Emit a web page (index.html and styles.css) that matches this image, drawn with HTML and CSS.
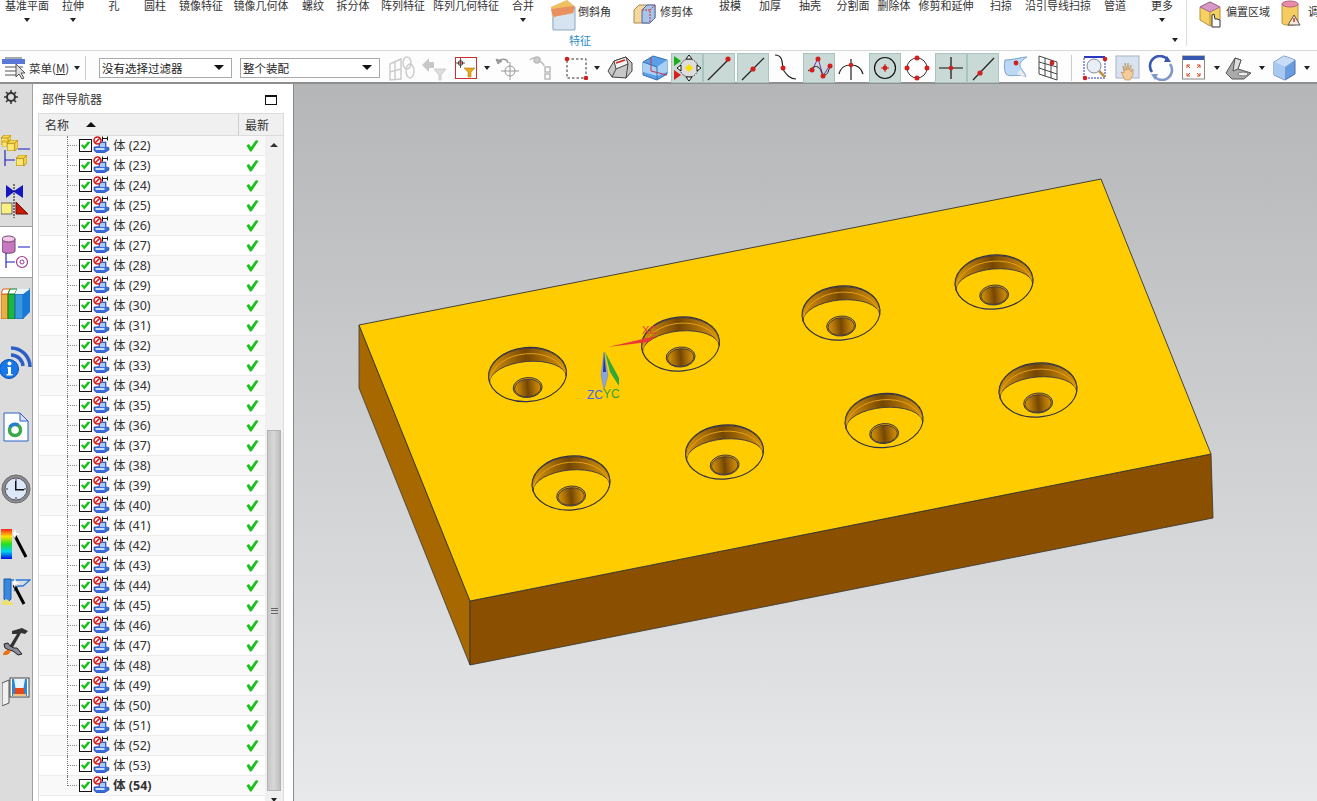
FILE: index.html
```html
<!DOCTYPE html>
<html lang="zh">
<head>
<meta charset="utf-8">
<title>部件导航器</title>
<link rel="stylesheet" href="styles.css">
</head>
<body>
<svg class="defs" aria-hidden="true">
  <symbol id="chk" viewBox="0 0 13 13"><rect x=".5" y=".5" width="12" height="12" fill="#fff" stroke="#111"/><path d="M2 6.500 5.300 10.500 11.500 3.200 8.800 2.600 5.200 7 3.800 5.200Z" fill="#14c014"/></symbol>
  <symbol id="body" viewBox="0 0 17 17"><path d="M6 6h7v5l3 .5V14l-5 3H4l-3-2.500V11l5-.5Z" fill="#3a6cd8" stroke="#1f3f9c" stroke-width=".6"/><path d="M7 7h5v4H7Z" fill="#a9c8f4"/><path d="M2.500 12h9v2h-9Z" fill="#cfe0fa"/><path d="M9.500 .5v5M9.500 2.500h5M14.500 .5v4" stroke="#111" fill="none"/><circle cx="4.500" cy="4.500" r="3.500" fill="#fff" stroke="#d81818" stroke-width="1.600"/><path d="M2 7 7 2" stroke="#d81818" stroke-width="1.600"/></symbol>
  <symbol id="tick" viewBox="0 0 13 13"><path d="M.5 6.500 3 5l2 3 5-7 2.500 1L5.500 12.500H4Z" fill="#1cc01c"/></symbol>
  <symbol id="cube" viewBox="0 0 10 10"><path d="M0 3 3 0h7v7l-3 3H0Z" fill="#f8d848" stroke="#b08820" stroke-width=".8"/><path d="M0 3h7v7M7 3l3-3" fill="none" stroke="#b08820" stroke-width=".8"/><path d="M1 4h5v5H1Z" fill="#fbe878"/></symbol>
</svg>

<header class="ribbon">
  <div class="rib-grid">
    <div class="ri">基准平面<i class="dn"></i></div>
    <div class="ri">拉伸<i class="dn"></i></div>
    <div class="ri">孔</div>
    <div class="ri">圆柱</div>
    <div class="ri">镜像特征</div>
    <div class="ri">镜像几何体</div>
    <div class="ri">螺纹</div>
    <div class="ri">拆分体</div>
    <div class="ri">阵列特征</div>
    <div class="ri">阵列几何特征</div>
    <div class="ri">合并<i class="dn"></i></div>
    <div class="rbig">
      <svg width="26" height="31" viewBox="0 0 26 31"><path d="M1 7 17 0l8 6v24H3Z" fill="#cfe0ef"/><path d="M3 15v15h22V15Z" fill="#d6e4f2"/><path d="M1 7 17 0l8 7-2 6-20 4Z" fill="#f0c060"/><path d="M1 9l22-3 2 1-2 6-20 4Z" fill="#e89060"/><path d="M3 17v13h22V7" fill="none" stroke="#8fa7bf"/></svg>
      <span>倒斜角</span>
    </div>
    <div class="rbig rbig2">
      <svg width="24" height="20" viewBox="0 0 24 20"><path d="M1 6 6 1h16v13l-5 5H1Z" fill="#f4d8a0" stroke="#a88a50"/><path d="M9 6l5-5h8v13l-5 5H9Z" fill="#a8c4ea" stroke="#4a6aa8"/><path d="M9 6h8v13M17 6l5-5" fill="none" stroke="#d03030" stroke-dasharray="2 1"/></svg>
      <span>修剪体</span>
    </div>
    <div class="ri">拔模</div>
    <div class="ri">加厚</div>
    <div class="ri">抽壳</div>
    <div class="ri">分割面</div>
    <div class="ri">删除体</div>
    <div class="ri">修剪和延伸</div>
    <div class="ri">扫掠</div>
    <div class="ri">沿引导线扫掠</div>
    <div class="ri">管道</div>
    <div class="ri ri-more">更多<i class="dn"></i><i class="dn dn-corner"></i></div>
    <div class="rbig rbig3">
      <svg width="24" height="28" viewBox="0 0 24 28"><path d="M1 6 11 1l10 5v13l-10 6-10-6Z" fill="#f6d060" stroke="#b89040"/><path d="M1 6l10 5 10-5-10-5Z" fill="#d898c8" stroke="#a06898"/><path d="M11 11v14" stroke="#b89040"/><path d="M13 26V14l2-1 1 5 2 0 3 1v7Z" fill="#fff" stroke="#333"/></svg>
      <span>偏置区域</span>
    </div>
    <div class="rbig rbig4">
      <svg width="20" height="26" viewBox="0 0 20 26"><path d="M1 4v19c0 3 16 3 16 0V4Z" fill="#f4cc60" stroke="#b8944a"/><ellipse cx="9" cy="4" rx="8" ry="3" fill="#e88ca8" stroke="#b86080"/><path d="M13 15l6 10H7Z" fill="#f8e8d8" stroke="#555"/><path d="M13 18v4" stroke="#d03030" stroke-width="1.500"/></svg>
      <span>调</span>
    </div>
  </div>
  <div class="rib-group">特征</div>
</header>

<nav class="toolbar">
  <div class="menu">
    <svg width="24" height="24" viewBox="0 0 24 24"><path d="M0 3h23v5H0Z" fill="#5a78d8"/><path d="M3 2h17M3 11h18M3 15h14M3 19h12" stroke="#555" fill="none"/><path d="M14 8v13l3-3 3 5 2-1-3-5h4Z" fill="#ddd" stroke="#555"/></svg>
    <span class="menu-t">菜单(<u>M</u>)</span><i class="dn"></i>
  </div>
  <div class="vsep"></div>
  <div class="sel sel1">没有选择过滤器<i class="dn dn-b"></i></div>
  <div class="sel sel2">整个装配<i class="dn dn-b"></i></div>
  <div class="tools">
    <div class="t"><svg width="30" height="28" viewBox="0 0 30 28" fill="none" stroke="#ccc" stroke-width="1.500"><path d="M3 10 14 5v20L3 26ZM3 18l11-3M8 8v18"/><ellipse cx="20" cy="9" rx="4" ry="6"/><ellipse cx="23" cy="17" rx="4" ry="7"/></svg></div>
    <div class="t"><svg width="28" height="26" viewBox="0 0 28 26"><path d="M2 10 9 3v4h5v6H9v4Z" fill="#c8c8c8"/><path d="M14 14h12l-5 6v5h-2v-5Z" fill="#ddd" stroke="#ccc"/></svg></div>
    <div class="t"><span class="t-red"><svg width="20" height="20" viewBox="0 0 20 20"><circle cx="4.500" cy="5" r="2.300" fill="none" stroke="#333"/><path d="M4.500 0v10M0 5h9" stroke="#333" stroke-width=".8"/><circle cx="4.500" cy="5" r="1" fill="#d02020"/><path d="M8 10h11l-4 4v5h-3v-5Z" fill="#e8a818" stroke="#a87810" stroke-width=".6"/></svg></span></div>
    <div class="t"><i class="dn"></i></div>
    <div class="t"><svg width="28" height="28" viewBox="0 0 28 28" fill="none" stroke="#999"><circle cx="16" cy="17" r="5"/><path d="M16 8v18M7 17h18"/><path d="M4 9c2-5 9-5 10 0" stroke-width="1.500"/><path d="M2 5l2 5 4-3Z" fill="#999"/></svg></div>
    <div class="t"><svg width="28" height="28" viewBox="0 0 28 28" fill="none" stroke="#bbb" stroke-width="1.500"><path d="M2 6c3-4 8-2 9 0s5 3 5 6"/><circle cx="9" cy="6" r="3" fill="#ccc"/><rect x="17" y="13" width="5" height="5"/><rect x="17" y="20" width="5" height="5"/></svg></div>
    <div class="t"><svg width="24" height="24" viewBox="0 0 24 24"><rect x="3" y="3" width="19" height="19" fill="none" stroke="#333" stroke-dasharray="2.500 2"/><circle cx="3" cy="3" r="2.300" fill="#d02020"/><circle cx="22" cy="22" r="2.300" fill="#d02020"/></svg></div>
    <div class="t"><i class="dn"></i></div>
    <div class="t"><svg width="26" height="24" viewBox="0 0 26 24"><path d="M1 15 7 5l12-4 6 6v8l-6 7-14-1Z" fill="#c8c8c8" stroke="#444"/><path d="M7 5 19 1l2 7-12 5Z" fill="#f2f2f2" stroke="#444"/><path d="M9 7l9-3" stroke="#d02020" stroke-width="1.500"/><path d="M21 8l-2 14M9 13l-4 8" stroke="#444" fill="none"/></svg></div>
    <div class="t"><svg width="26" height="26" viewBox="0 0 26 26"><path d="M1 7 11 1l14 4v14l-10 6-14-5Z" fill="#5aa0e8" stroke="#3870b0"/><path d="M1 7l14 5 10-7v12l-10 4-14-4Z" fill="#a8d0f4"/><path d="M9 3v13l16 4" fill="none" stroke="#d03050"/><path d="M1 7l14 5v13" fill="none" stroke="#3870b0"/></svg></div>
    <div class="t on"><svg width="28" height="28" viewBox="0 0 28 28"><path d="M1 2l7 5-7 5Z" fill="#18b018"/><path d="M1 16l7 5-7 5Z" fill="#d82020"/><circle cx="16" cy="14" r="9" fill="#ddd" stroke="#333" stroke-dasharray="1.500 1"/><path d="M16 1l3 4h-6ZM16 27l3-4h-6ZM4 14l4-3v6ZM28 14l-4-3v6Z" fill="#fff" stroke="#111"/><path d="M16 10l4 4-4 4-4-4Z" fill="#f8e000"/></svg></div>
    <div class="t on"><svg width="26" height="26" viewBox="0 0 26 26"><path d="M2 25 23 4" stroke="#222" stroke-width="1.200"/><circle cx="22" cy="4" r="2.600" fill="#d02020"/></svg></div>
    <div class="t t-gap on"><svg width="26" height="26" viewBox="0 0 26 26"><path d="M2 25 24 3" stroke="#222" stroke-width="1.200"/><circle cx="13" cy="14" r="2.600" fill="#d02020"/></svg></div>
    <div class="t"><svg width="24" height="28" viewBox="0 0 24 28" fill="none"><path d="M2 1c10 0 6 12 9 16s6 8 12 8" stroke="#222" stroke-width="1.200"/><circle cx="10" cy="14" r="2.500" fill="#d02020"/></svg></div>
    <div class="t t-gap on"><svg width="28" height="26" viewBox="0 0 28 26" fill="none"><path d="M7 16 13 3l5 18 7-11" stroke="#8a28b0"/><path d="M3 16c4-2 6-6 10-4s3 9 7 8 3-7 6-8" stroke="#222"/><circle cx="7" cy="15" r="2.500" fill="#d02020"/><circle cx="13" cy="4" r="2.500" fill="#d02020"/><circle cx="18" cy="21" r="2.500" fill="#d02020"/><circle cx="25" cy="11" r="2.500" fill="#d02020"/></svg></div>
    <div class="t"><svg width="26" height="26" viewBox="0 0 26 26" fill="none"><path d="M1 19c2-8 7-9 12-9s10 2 12 9M13 4v21" stroke="#222" stroke-width="1.200"/><circle cx="13" cy="10" r="2.300" fill="#d02020"/></svg></div>
    <div class="t t-gap on"><svg width="26" height="26" viewBox="0 0 26 26" fill="none"><circle cx="13" cy="13" r="10.500" stroke="#111" stroke-width="1.200"/><circle cx="13" cy="13" r="2.400" fill="#d02020"/><path d="M13 9v8M9 13h8" stroke="#d02020"/></svg></div>
    <div class="t"><svg width="26" height="26" viewBox="0 0 26 26" fill="none"><circle cx="13" cy="13" r="10" stroke="#333"/><circle cx="13" cy="3" r="2.500" fill="#d02020"/><circle cx="13" cy="23" r="2.500" fill="#d02020"/><circle cx="3" cy="13" r="2.500" fill="#d02020"/><circle cx="23" cy="13" r="2.500" fill="#d02020"/></svg></div>
    <div class="t t-gap on"><svg width="26" height="26" viewBox="0 0 26 26"><path d="M13 2v22M1 13h24" stroke="#111" stroke-width="1.200"/><circle cx="13" cy="13" r="2.300" fill="#d02020"/></svg></div>
    <div class="t on"><svg width="26" height="26" viewBox="0 0 26 26"><path d="M3 25 24 3" stroke="#222" stroke-width="1.200"/><circle cx="10" cy="18" r="2.600" fill="#d02020"/></svg></div>
    <div class="t"><svg width="26" height="28" viewBox="0 0 26 28"><path d="M2 6c8 0 17-3 22-3-3 2-8 5-7 9s5 6 6 11c-6-4-17 1-20-3C1 16 1 10 2 6Z" fill="#bcd8f2" stroke="#7aa4d0"/><path d="M17 12c-1 3 3 6 6 11-4-1-7-2-9-3 3-2 4-5 3-8Z" fill="#eaeaea"/><circle cx="13" cy="9" r="2.400" fill="#d02020"/></svg></div>
    <div class="t"><svg width="24" height="28" viewBox="0 0 24 28" fill="none" stroke="#333" stroke-width=".9"><path d="M3 2 21 8v18L3 20ZM9 4v18M15 6v18M3 8l18 5M3 14l18 6"/><circle cx="16" cy="9" r="2.400" fill="#d02020" stroke="none"/></svg></div>
    <div class="t t-sep"></div>
    <div class="t"><svg width="26" height="26" viewBox="0 0 26 26" fill="none"><rect x="1" y="2" width="21" height="21" fill="#fff" stroke="#2838c0" stroke-dasharray="2 1"/><path d="M1 2h21" stroke="#2838c0" stroke-width="2"/><circle cx="11" cy="11" r="7" fill="#e8eef6" stroke="#889"/><path d="M16 16l6 6" stroke="#c09040" stroke-width="2.500"/><circle cx="22" cy="4" r="2.300" fill="#d02020"/><circle cx="2" cy="23" r="2.300" fill="#d02020"/></svg></div>
    <div class="t"><svg width="26" height="26" viewBox="0 0 26 26"><rect x="1" y="1" width="23" height="22" fill="#d8e2f0" stroke="#aab4c4"/><path d="M10 25l-4-8 3 1-1-7 2 5V8l2 7 1-7 1 7 2-5v7l2-3v6l-3 5Z" fill="#f4cc98" stroke="#b08850" stroke-width=".6"/></svg></div>
    <div class="t"><svg width="26" height="26" viewBox="0 0 26 26" fill="none" stroke-width="2.600"><path d="M4 17A10 10 0 0 1 20 5" stroke="#3858b0"/><path d="M22 9a10 10 0 0 1-16 12" stroke="#8098c8"/><path d="M19 1l4 6-7 0Z" fill="#3858b0" stroke="none"/><path d="M7 25l-4-6 7 0Z" fill="#8098c8" stroke="none"/></svg></div>
    <div class="t"><svg width="24" height="26" viewBox="0 0 24 26"><rect x=".5" y="1" width="22" height="23" fill="#fff" stroke="#888"/><path d="M1 1h21v4H1Z" fill="#3858b0"/><path d="M5 10l3 3M5 10v3M5 10h3M18 10l-3 3M18 10v3M18 10h-3M5 21l3-3M5 21v-3M5 21h3M18 21l-3-3M18 21v-3M18 21h-3" stroke="#d84820" fill="none"/></svg></div>
    <div class="t"><i class="dn"></i></div>
    <div class="t"><svg width="28" height="24" viewBox="0 0 28 24"><path d="M1 17 10 2l6 2-3 9 13 4-7 6H7Z" fill="#aaa" stroke="#555"/><path d="M10 2l6 2-3 9-5 2Z" fill="#ddd" stroke="#555"/><ellipse cx="18" cy="18" rx="5" ry="2" fill="#eee" stroke="#777"/></svg></div>
    <div class="t"><i class="dn"></i></div>
    <div class="t"><svg width="24" height="26" viewBox="0 0 24 26"><path d="M1 7 11 1l11 4v14l-10 6-11-5Z" fill="#6a9ce0" stroke="#4a70b0"/><path d="M1 7l11 5v13l-11-5Z" fill="#a8c8f0"/><path d="M1 7 11 1l11 4-10 7Z" fill="#c8dcf6"/></svg></div>
    <div class="t"><i class="dn"></i></div>
  </div>
</nav>

<main class="main">
  <aside class="tabs">
    <div class="tab tab-gear"><svg width="16" height="16" viewBox="0 0 16 16" fill="none" stroke="#333"><circle cx="8" cy="8" r="4" stroke-width="2"/><path d="M8 1v3M8 12v3M1 8h3M12 8h3M3 3l2 2M11 11l2 2M13 3l-2 2M3 13l2-2" stroke-width="1.500"/></svg></div>
    <div class="tab"><svg width="30" height="34" viewBox="0 0 30 34"><use href="#cube" x="0" y="1" width="10" height="10"/><use href="#cube" x="1" y="6" width="7" height="7"/><use href="#cube" x="6" y="6" width="11" height="11"/><path d="M17 15h12M4 16v16M4 26h10" stroke="#1818c0" fill="none" stroke-width="1.100"/><use href="#cube" x="15" y="21" width="11" height="11"/></svg></div>
    <div class="tab"><svg width="30" height="34" viewBox="0 0 30 34"><path d="M5 1l8 6 9-6v13l-9-6-8 6Z" fill="#1818c0"/><path d="M13 0v34" stroke="#111" stroke-dasharray="2 1"/><rect x="0" y="19" width="11" height="11" fill="#f8f080" stroke="#666"/><path d="M15 18v12h12Z" fill="#c81808" stroke="#701008"/></svg></div>
    <div class="tab tab-on"><svg width="30" height="34" viewBox="0 0 30 34"><path d="M0 4v12c0 3 13 3 13 0V4Z" fill="#c878c0" stroke="#704870"/><ellipse cx="6.500" cy="4" rx="6.500" ry="3" fill="#f4c8e8" stroke="#704870"/><path d="M16 12h12M4 18v15M4 27h9" stroke="#1818c0" fill="none" stroke-width="1.100"/><circle cx="20" cy="27" r="5.500" fill="#fff" stroke="#a03898" stroke-width="1.200"/><circle cx="20" cy="27" r="2" fill="none" stroke="#a03898"/></svg></div>
    <div class="tab"><svg width="31" height="32" viewBox="0 0 31 32"><path d="M0 7h7v25H0Z" fill="#e8b040" stroke="#e06010"/><path d="M2 2h7l-2 5H0Z" fill="#fff" stroke="#e06010"/><path d="M7 7h7v25H7Z" fill="#1cb83c" stroke="#108020"/><path d="M9 2h7l-2 5H7Z" fill="#fff" stroke="#108020"/><path d="M14 7h8v25h-8Z" fill="#3898e0" stroke="#1868b0"/><path d="M22 7l7-6v24l-7 7Z" fill="#1878d8"/><path d="M16 2h13l-7 5h-8Z" fill="#e8f4ff"/></svg></div>
    <div class="tab tab-lg"><svg width="32" height="34" viewBox="0 0 32 34" fill="none"><path d="M11 3a19 19 0 0 1 19 19" stroke="#2c5ec8" stroke-width="3.500"/><path d="M11 10a12 12 0 0 1 12 11" stroke="#2c5ec8" stroke-width="3.500"/><circle cx="9" cy="24" r="9.500" fill="#1878e8" stroke="#0a4ab0"/><circle cx="9.500" cy="18.500" r="2" fill="#fff"/><path d="M7.500 22h3.500v7h1.500v1.500h-6V29H8v-5.500H7.500Z" fill="#fff"/></svg></div>
    <div class="tab tab-lg"><svg width="26" height="30" viewBox="0 0 26 30"><path d="M1 1h16l8 8v20H1Z" fill="#fff" stroke="#2a62c8"/><path d="M17 1v8h8Z" fill="#dde" stroke="#2a62c8"/><circle cx="12" cy="18" r="5.500" fill="none" stroke="#38a848" stroke-width="3.500"/><path d="M7 15a6 6 0 0 1 8-2" stroke="#2a7ad8" stroke-width="3.500" fill="none"/></svg></div>
    <div class="tab tab-lg"><svg width="30" height="30" viewBox="0 0 30 30"><circle cx="15" cy="15" r="14" fill="#8c8c8c" stroke="#6c6c6c"/><circle cx="15" cy="15" r="11" fill="#dce8f8" stroke="#556"/><path d="M15 5v2M15 23v2M5 15h2M23 15h2" stroke="#333"/><path d="M14 7h1.500v8H23v1.500H14Z" fill="#111"/></svg></div>
    <div class="tab tab-sm"><svg width="30" height="32" viewBox="0 0 30 32"><defs><linearGradient id="rb" x1="0" y1="0" x2="0" y2="1"><stop offset="0" stop-color="#ff2020"/><stop offset=".25" stop-color="#ffe000"/><stop offset=".5" stop-color="#20e020"/><stop offset=".75" stop-color="#00d0f0"/><stop offset="1" stop-color="#0010e0"/></linearGradient></defs><rect x="0" y="1" width="11" height="30" fill="url(#rb)"/><path d="M14 8l11 21" stroke="#000" stroke-width="3"/><path d="M12 6l2-5 1 4 5 1-5 1-1 4Z" fill="#fff"/></svg></div>
    <div class="tab"><svg width="30" height="30" viewBox="0 0 30 30"><path d="M3 2h7v20l-4 4-3-4Z" fill="#3888e0" stroke="#1858a8"/><path d="M0 26l5-4 5 3 3 3H2Z" fill="#f0e070"/><path d="M10 3h19l-7 6h-5l-4 5" fill="none" stroke="#2a7ad8" stroke-width="1.300"/><path d="M13 8l10 19" stroke="#000" stroke-width="3"/><path d="M12 6l2-5 1 4 4 1-4 1-1 4Z" fill="#fff"/></svg></div>
    <div class="tab"><svg width="28" height="30" viewBox="0 0 28 30"><path d="M10 4l10-3 6 3-3 3-4-1-9 16-3-2 8-13-5 0Z" fill="#333"/><path d="M2 17l4-1 2 3 4 2 3 0 5 6-4 1-5-4-4-1-4-2Z" fill="#8a8a98" stroke="#222"/><path d="M1 28c0-3 3-5 6-5s1 6-6 5Z" fill="#f07010"/></svg></div>
    <div class="tab tab-sm"><svg width="28" height="30" viewBox="0 0 28 30"><path d="M0 7l7-3v23L0 30Z" fill="#f0f0f0" stroke="#555"/><rect x="8" y="2" width="19" height="19" fill="#fff" stroke="#444"/><path d="M10 3h15v17H10Z" fill="#2888d8"/><path d="M12 3h11l-2 12h-7Z" fill="#e8f4ff"/><path d="M13 12h9v6H13Z" fill="#e84818"/><path d="M11 18h13v2H11Z" fill="#f8c080"/></svg></div>
  </aside>

  <section class="panel">
    <div class="panel-head"><span>部件导航器</span><i class="maxbox"></i></div>
    <div class="frame">
      <div class="thead"><div class="th-name">名称<i class="up"></i></div><div class="th-new">最新</div></div>
      <div class="tbody">
        <div class="list">
          <div class="row"><span class="tree"></span><svg class="chk"><use href="#chk"/></svg><svg class="bd"><use href="#body"/></svg><span class="lb">体 (22)</span><svg class="tk"><use href="#tick"/></svg></div>
          <div class="row"><span class="tree"></span><svg class="chk"><use href="#chk"/></svg><svg class="bd"><use href="#body"/></svg><span class="lb">体 (23)</span><svg class="tk"><use href="#tick"/></svg></div>
          <div class="row"><span class="tree"></span><svg class="chk"><use href="#chk"/></svg><svg class="bd"><use href="#body"/></svg><span class="lb">体 (24)</span><svg class="tk"><use href="#tick"/></svg></div>
          <div class="row"><span class="tree"></span><svg class="chk"><use href="#chk"/></svg><svg class="bd"><use href="#body"/></svg><span class="lb">体 (25)</span><svg class="tk"><use href="#tick"/></svg></div>
          <div class="row"><span class="tree"></span><svg class="chk"><use href="#chk"/></svg><svg class="bd"><use href="#body"/></svg><span class="lb">体 (26)</span><svg class="tk"><use href="#tick"/></svg></div>
          <div class="row"><span class="tree"></span><svg class="chk"><use href="#chk"/></svg><svg class="bd"><use href="#body"/></svg><span class="lb">体 (27)</span><svg class="tk"><use href="#tick"/></svg></div>
          <div class="row"><span class="tree"></span><svg class="chk"><use href="#chk"/></svg><svg class="bd"><use href="#body"/></svg><span class="lb">体 (28)</span><svg class="tk"><use href="#tick"/></svg></div>
          <div class="row"><span class="tree"></span><svg class="chk"><use href="#chk"/></svg><svg class="bd"><use href="#body"/></svg><span class="lb">体 (29)</span><svg class="tk"><use href="#tick"/></svg></div>
          <div class="row"><span class="tree"></span><svg class="chk"><use href="#chk"/></svg><svg class="bd"><use href="#body"/></svg><span class="lb">体 (30)</span><svg class="tk"><use href="#tick"/></svg></div>
          <div class="row"><span class="tree"></span><svg class="chk"><use href="#chk"/></svg><svg class="bd"><use href="#body"/></svg><span class="lb">体 (31)</span><svg class="tk"><use href="#tick"/></svg></div>
          <div class="row"><span class="tree"></span><svg class="chk"><use href="#chk"/></svg><svg class="bd"><use href="#body"/></svg><span class="lb">体 (32)</span><svg class="tk"><use href="#tick"/></svg></div>
          <div class="row"><span class="tree"></span><svg class="chk"><use href="#chk"/></svg><svg class="bd"><use href="#body"/></svg><span class="lb">体 (33)</span><svg class="tk"><use href="#tick"/></svg></div>
          <div class="row"><span class="tree"></span><svg class="chk"><use href="#chk"/></svg><svg class="bd"><use href="#body"/></svg><span class="lb">体 (34)</span><svg class="tk"><use href="#tick"/></svg></div>
          <div class="row"><span class="tree"></span><svg class="chk"><use href="#chk"/></svg><svg class="bd"><use href="#body"/></svg><span class="lb">体 (35)</span><svg class="tk"><use href="#tick"/></svg></div>
          <div class="row"><span class="tree"></span><svg class="chk"><use href="#chk"/></svg><svg class="bd"><use href="#body"/></svg><span class="lb">体 (36)</span><svg class="tk"><use href="#tick"/></svg></div>
          <div class="row"><span class="tree"></span><svg class="chk"><use href="#chk"/></svg><svg class="bd"><use href="#body"/></svg><span class="lb">体 (37)</span><svg class="tk"><use href="#tick"/></svg></div>
          <div class="row"><span class="tree"></span><svg class="chk"><use href="#chk"/></svg><svg class="bd"><use href="#body"/></svg><span class="lb">体 (38)</span><svg class="tk"><use href="#tick"/></svg></div>
          <div class="row"><span class="tree"></span><svg class="chk"><use href="#chk"/></svg><svg class="bd"><use href="#body"/></svg><span class="lb">体 (39)</span><svg class="tk"><use href="#tick"/></svg></div>
          <div class="row"><span class="tree"></span><svg class="chk"><use href="#chk"/></svg><svg class="bd"><use href="#body"/></svg><span class="lb">体 (40)</span><svg class="tk"><use href="#tick"/></svg></div>
          <div class="row"><span class="tree"></span><svg class="chk"><use href="#chk"/></svg><svg class="bd"><use href="#body"/></svg><span class="lb">体 (41)</span><svg class="tk"><use href="#tick"/></svg></div>
          <div class="row"><span class="tree"></span><svg class="chk"><use href="#chk"/></svg><svg class="bd"><use href="#body"/></svg><span class="lb">体 (42)</span><svg class="tk"><use href="#tick"/></svg></div>
          <div class="row"><span class="tree"></span><svg class="chk"><use href="#chk"/></svg><svg class="bd"><use href="#body"/></svg><span class="lb">体 (43)</span><svg class="tk"><use href="#tick"/></svg></div>
          <div class="row"><span class="tree"></span><svg class="chk"><use href="#chk"/></svg><svg class="bd"><use href="#body"/></svg><span class="lb">体 (44)</span><svg class="tk"><use href="#tick"/></svg></div>
          <div class="row"><span class="tree"></span><svg class="chk"><use href="#chk"/></svg><svg class="bd"><use href="#body"/></svg><span class="lb">体 (45)</span><svg class="tk"><use href="#tick"/></svg></div>
          <div class="row"><span class="tree"></span><svg class="chk"><use href="#chk"/></svg><svg class="bd"><use href="#body"/></svg><span class="lb">体 (46)</span><svg class="tk"><use href="#tick"/></svg></div>
          <div class="row"><span class="tree"></span><svg class="chk"><use href="#chk"/></svg><svg class="bd"><use href="#body"/></svg><span class="lb">体 (47)</span><svg class="tk"><use href="#tick"/></svg></div>
          <div class="row"><span class="tree"></span><svg class="chk"><use href="#chk"/></svg><svg class="bd"><use href="#body"/></svg><span class="lb">体 (48)</span><svg class="tk"><use href="#tick"/></svg></div>
          <div class="row"><span class="tree"></span><svg class="chk"><use href="#chk"/></svg><svg class="bd"><use href="#body"/></svg><span class="lb">体 (49)</span><svg class="tk"><use href="#tick"/></svg></div>
          <div class="row"><span class="tree"></span><svg class="chk"><use href="#chk"/></svg><svg class="bd"><use href="#body"/></svg><span class="lb">体 (50)</span><svg class="tk"><use href="#tick"/></svg></div>
          <div class="row"><span class="tree"></span><svg class="chk"><use href="#chk"/></svg><svg class="bd"><use href="#body"/></svg><span class="lb">体 (51)</span><svg class="tk"><use href="#tick"/></svg></div>
          <div class="row"><span class="tree"></span><svg class="chk"><use href="#chk"/></svg><svg class="bd"><use href="#body"/></svg><span class="lb">体 (52)</span><svg class="tk"><use href="#tick"/></svg></div>
          <div class="row"><span class="tree"></span><svg class="chk"><use href="#chk"/></svg><svg class="bd"><use href="#body"/></svg><span class="lb">体 (53)</span><svg class="tk"><use href="#tick"/></svg></div>
          <div class="row row-last"><span class="tree"></span><svg class="chk"><use href="#chk"/></svg><svg class="bd"><use href="#body"/></svg><span class="lb">体 (54)</span><svg class="tk"><use href="#tick"/></svg></div>
        </div>
        <div class="sbar">
          <div class="sb-up"><i class="up up-sm"></i></div>
          <div class="sb-track"></div>
          <div class="sb-thumb"><i class="grip"></i></div>
          <div class="sb-dn"><i class="dn"></i></div>
        </div>
      </div>
    </div>
  </section>

  <section class="canvas">
    <svg class="scene" viewBox="294 84 1023 717">
      <defs>
        <linearGradient id="wall" x1="0" y1="0" x2="1" y2="0"><stop offset="0" stop-color="#d89400"/><stop offset=".22" stop-color="#b07408"/><stop offset=".5" stop-color="#744600"/><stop offset=".78" stop-color="#b07408"/><stop offset="1" stop-color="#d89400"/></linearGradient>
        <g id="hole" transform="rotate(-5)">
          <ellipse rx="39" ry="27" fill="#ffcc00" stroke="#30304a" stroke-width="1.100"/>
          <path d="M-38.500 5A39 27 0 1 1 38.500 5 38.500 18 0 0 0-38.500 5Z" fill="url(#wall)" stroke="#30304a" stroke-width=".8"/>
          <path d="M-37.500 1A38 26 0 0 1 37.500 1" fill="none" stroke="#e8a418" stroke-width=".9"/>
          <ellipse cx="-1" cy="13" rx="14.500" ry="10" fill="#e0a000" stroke="#30304a" stroke-width=".9"/>
          <ellipse cx="-1" cy="13.500" rx="13.200" ry="8.800" fill="url(#wall)" stroke="#30304a" stroke-width=".8"/>
        </g>
      </defs>
      <path d="M359 325 470 601V665L359 388Z" fill="#a86800" stroke="#3c3c3c" stroke-width=".8"/>
      <path d="M470 601 1211 454 1213 518 470 665Z" fill="#8a5000" stroke="#333" stroke-width=".8"/>
      <path d="M359 325 1101 179 1211 454 470 601Z" fill="#ffcc00" stroke="#333" stroke-width=".9"/>
      <use href="#hole" x="527.500" y="374.500"/>
      <use href="#hole" x="680.500" y="344"/>
      <use href="#hole" x="841" y="313"/>
      <use href="#hole" x="994" y="282"/>
      <use href="#hole" x="571" y="483"/>
      <use href="#hole" x="724.500" y="452"/>
      <use href="#hole" x="884" y="420.500"/>
      <use href="#hole" x="1038" y="390"/>
      <path d="M608 347 656 336 648 342Z" fill="#e83838"/>
      <path d="M604 352 608 375 604 390 601 375Z" fill="#8ca4d8" stroke="#6c84c0" stroke-width=".5"/>
      <path d="M604 352 606 372H603Z" fill="#1838a8"/>
      <path d="M605 352 619 378 619 386 610 372Z" fill="#30a838"/>
      <text class="ax ax-x" x="642" y="334">XC</text>
      <text class="ax ax-z" x="587" y="399">ZC</text>
      <text class="ax ax-y" x="603" y="398">YC</text>
    </svg>
  </section>
</main>
</body>
</html>
```
FILE: styles.css
```css
* { box-sizing: border-box; }
html, body { margin: 0; height: 801px; overflow: hidden; background: #fff; }
body {
  width: 1317px;
  display: flex;
  flex-direction: column;
  font-family: "Noto Sans CJK SC", "Liberation Sans", sans-serif;
  font-size: 11px;
  color: #333;
}
i { font-style: normal; display: block; }
.defs { position: absolute; width: 0; height: 0; }

.dn { width: 0; height: 0; border: 3.5px solid transparent; border-top: 4px solid #222; border-bottom: 0; }
.dn-b { border-width: 5px 5px 0; border-top-color: #111; margin-left: auto; }

/* ribbon */
.ribbon { height: 51px; flex: none; border-bottom: 1px solid #d9d9d9; background: #fff; position: relative; overflow: hidden; }
.rib-grid {
  display: grid;
  height: 34px;
  margin-left: -1px;
  grid-template-columns: 56px 36px 46px 36px 56px 64px 40px 40px 60px 66px 48px 79px 84px 40px 40px 40px 46px 36px 68px 42px 72px 42px 52px 94px 37px;
}
.ri { display: flex; flex-direction: column; align-items: center; line-height: 13px; white-space: nowrap; font-family: "Liberation Sans", "Noto Sans CJK SC", sans-serif; }
.ri .dn { margin-top: 5px; }
.ri-more { position: relative; }
.ri .dn-corner { position: absolute; top: 38px; left: 36px; margin: 0; }
.rbig { display: flex; align-items: flex-start; gap: 2px; padding-left: 3px; white-space: nowrap; }
.rbig span { margin-top: 4px; line-height: 15px; }
.rbig2 { padding-left: 7px; gap: 3px; }
.rbig2 svg { margin-top: 4px; }
.rbig3 { padding-left: 12px; gap: 3px; border-left: 1px solid #ddd; height: 46px; margin-left: -2px; }
.rbig3 svg { margin-top: 1px; }
.rbig4 { padding-left: 0; margin-left: -1px; gap: 7px; }
.rib-group { position: absolute; top: 33px; left: 569px; color: #2b8cc4; font-size: 11px; line-height: 15px; }

/* toolbar */
.toolbar { height: 33px; flex: none; display: flex; align-items: center; padding-top: 2px; border-bottom: 2px solid #8f8f8f; background: #fdfdfd; }
.menu { width: 85px; display: flex; align-items: center; padding-left: 2px; gap: 3px; }
.menu-t { white-space: nowrap; margin-right: 2px; font-size: 11.5px; }
.vsep { width: 1px; height: 24px; background: #ccc; margin-right: 13px; }
.sel { height: 20px; border: 1px solid #aaa; background: #fff; display: flex; align-items: center; padding: 0 7px 0 2px; color: #222; font-size: 11.5px; }
.sel1 { width: 133px; margin-right: 8px; }
.sel2 { width: 140px; margin-right: 6px; }
.tools {
  display: grid;
  height: 30px;
  grid-template-columns: 32px 32px 32px 10px 32px 36px 32px 10px 36px 33px 32px 32px 34px 32px 34px 32px 34px 32px 34px 32px 33px 31px 17px 32px 32px 33px 34px 12px 32px 14px 32px 12px;
  align-items: center;
  justify-items: center;
}
.t { width: 100%; height: 30px; display: flex; align-items: center; justify-content: center; }
.t.on { background: #c8d9d6; border: 1px solid #a9c4bf; }
.t-gap.on { margin-left: 2px; width: calc(100% - 2px); }
.t-sep::after { content: ""; width: 1px; height: 26px; background: #ccc; }
.t-red { width: 22px; height: 22px; border: 1px solid #c83030; display: flex; align-items: center; justify-content: center; background: #fff; }

/* main */
.main { flex: 1; display: flex; min-height: 0; }
.tabs { width: 33px; flex: none; background: #dcdcdc; border-right: 1px solid #a0a0a0; display: flex; flex-direction: column; overflow: hidden; }
.tab { height: 50px; flex: none; display: flex; align-items: center; justify-content: center; }
.tab-gear { height: 42px; align-items: flex-start; padding-top: 5px; padding-right: 11px; padding-left: 0; }
.tab-on { height: 52px; background: #fff; margin-right: -1px; border-top: 1px solid #a0a0a0; border-bottom: 1px solid #a0a0a0; }
.tab-lg { height: 62px; }
.tab-lg:nth-child(6) { height: 68px; }
.tab-sm { height: 47px; }

.panel { width: 261px; flex: none; border-right: 1px solid #8a8a8a; background: #fff; display: flex; flex-direction: column; padding: 0 9px 0 5px; }
.panel-head { height: 29px; flex: none; display: flex; align-items: center; padding: 0 7px 0 4px; justify-content: space-between; color: #333; font-size: 12px; }
.maxbox { width: 12px; height: 10px; border: 1px solid #111; border-top-width: 2px; margin-top: 2px; }
.frame { flex: 1; min-height: 0; border: 1px solid #dcdcdc; border-bottom: 0; display: flex; flex-direction: column; }
.thead { height: 22px; flex: none; display: flex; background: #f0f0f0; border-bottom: 1px solid #dcdcdc; font-size: 12px; }
.th-name { width: 200px; border-right: 1px solid #d0d0d0; display: flex; align-items: center; padding-left: 6px; gap: 17px; }
.th-new { flex: 1; display: flex; align-items: center; padding-left: 6px; }
.up { width: 0; height: 0; border: 5px solid transparent; border-bottom: 5px solid #111; border-top: 0; }
.up-sm { border-width: 0 4px 4px; border-bottom-color: #333; }
.tbody { flex: 1; display: flex; min-height: 0; }
.list { width: 226px; flex: none; }
.row { height: 20px; display: flex; align-items: center; border-bottom: 1px solid #ececec; background: #fff; font-family: "Noto Sans", "Noto Sans CJK SC", sans-serif; font-size: 12.5px; color: #333; }
.row:nth-child(odd) { background: #f9f9f9; }
.tree {
  width: 12px; height: 20px; margin-left: 28px; flex: none;
  border-left: 1px dotted #777;
  background: repeating-linear-gradient(to right, #888 0 1px, transparent 1px 2px) left center / 9px 1px no-repeat;
}
.chk { width: 13px; height: 13px; flex: none; }
.bd { width: 17px; height: 17px; flex: none; margin: -2px 3px 0 1px; }
.lb { width: 133px; flex: none; white-space: nowrap; line-height: 18px; }
.tk { width: 13px; height: 13px; flex: none; }
.row-last .tree { align-self: flex-start; height: 10px; background-position: left bottom; }
.row-last .lb { font-weight: 700; }
.sbar { flex: 1; background: #f0f0f0; display: flex; flex-direction: column; align-items: center; min-height: 0; }
.sb-up { height: 18px; flex: none; display: flex; align-items: center; justify-content: center; }
.sb-track { flex: 1; }
.sb-thumb { width: 14px; height: 361px; flex: none; background: linear-gradient(to right, #c8c8c8, #d8d8d8 50%, #bdbdbd); border: 1px solid #b4b4b4; display: flex; align-items: center; justify-content: center; }
.grip { width: 7px; height: 6px; border-top: 1px solid #666; border-bottom: 1px solid #666; background: linear-gradient(#666, #666) center / 100% 1px no-repeat; }
.sb-dn { height: 10px; flex: none; padding-top: 7px; }

.canvas { flex: 1; min-width: 0; background: linear-gradient(#b4b6b8, #e8e9ea); }
.scene { display: block; width: 100%; height: 100%; }
.ax { font-family: "Liberation Sans", sans-serif; font-size: 12px; }
.ax-x { fill: #e04040; font-size: 11px; }
.ax-z { fill: #4466ee; }
.ax-y { fill: #2fa040; }
```
